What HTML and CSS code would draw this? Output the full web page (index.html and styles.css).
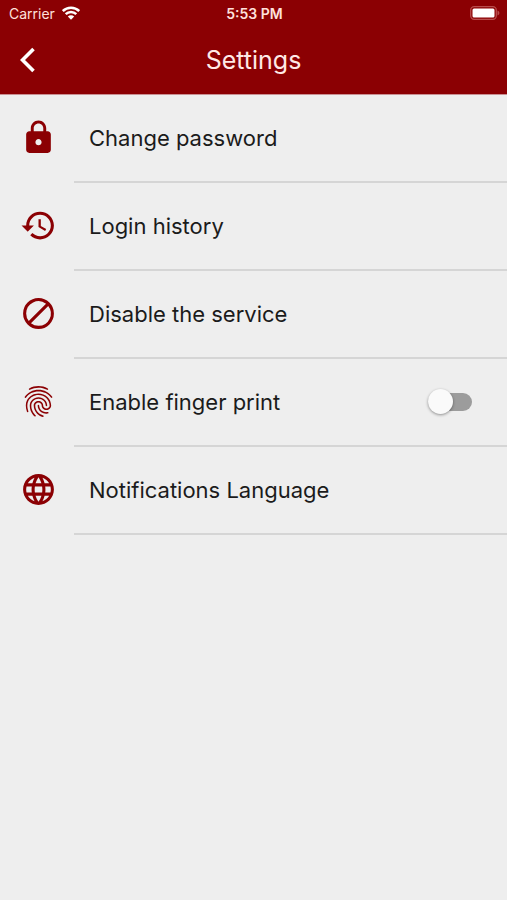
FILE: index.html
```html
<!DOCTYPE html>
<html lang="en">
<head>
<meta charset="utf-8">
<meta name="viewport" content="width=device-width, initial-scale=1">
<title>Settings</title>
<link rel="stylesheet" href="styles.css">
</head>
<body>
<header class="header">
  <div class="status">
    <div class="carrier">
      <span>Carrier</span>
      <svg class="wifi" viewBox="0 0 18 14" aria-hidden="true"><path d="M.8 5C5.300.5 12.700.5 17.200 5M3.700 8.200c3-3 7.600-3 10.600 0" fill="none" stroke="currentColor" stroke-width="2.500"/><path d="M9 13.800 5.800 10.600c1.900-1.700 4.500-1.700 6.400 0z" fill="currentColor"/></svg>
    </div>
    <time class="clock">5:53 PM</time>
    <svg class="battery" viewBox="0 0 30 14" aria-hidden="true"><rect x=".7" y=".7" width="25.600" height="12.600" rx="3.500" fill="none" stroke="#b84c4c" stroke-width="1.300"/><rect x="2.500" y="2.500" width="22" height="9" rx="1.500" fill="#fff"/><path d="M27.500 4.500c2.500 1 2.500 4 0 5z" fill="#b84c4c"/></svg>
  </div>
  <div class="titlebar">
    <button class="back" type="button" aria-label="Back"><svg viewBox="0 0 16 26" aria-hidden="true"><path d="M13.500 2 2.500 13l11 11" fill="none" stroke="currentColor" stroke-width="3.600"/></svg></button>
    <h1 class="title">Settings</h1>
  </div>
</header>
<main>
  <ul class="list">
    <li class="row">
      <svg class="icon" viewBox="0 0 24 24" aria-hidden="true"><path d="M18 8h-1V6c0-2.760-2.240-5-5-5S7 3.240 7 6v2H6c-1.100 0-2 .9-2 2v10c0 1.100.9 2 2 2h12c1.100 0 2-.9 2-2V10c0-1.100-.9-2-2-2zm-6 9c-1.100 0-2-.9-2-2s.9-2 2-2 2 .9 2 2-.9 2-2 2zm3.100-9H8.900V6c0-1.710 1.390-3.100 3.100-3.100s3.100 1.390 3.100 3.100v2z"/></svg>
      <a class="item" href="#password">Change password</a>
    </li>
    <li class="row">
      <svg class="icon" viewBox="0 0 24 24" aria-hidden="true"><path d="M13 3c-4.970 0-9 4.030-9 9H1l3.890 3.890.07.14L9 12H6c0-3.870 3.130-7 7-7s7 3.130 7 7-3.130 7-7 7c-1.930 0-3.680-.79-4.940-2.060l-1.420 1.420C8.270 19.990 10.510 21 13 21c4.970 0 9-4.030 9-9s-4.030-9-9-9zm-1 5v5l4.280 2.540.72-1.210-3.500-2.080V8H12z"/></svg>
      <a class="item" href="#history">Login history</a>
    </li>
    <li class="row">
      <svg class="icon" viewBox="0 0 24 24" aria-hidden="true"><path d="M12 2a10 10 0 1 0 0 20 10 10 0 0 0 0-20zM4 12a8 8 0 0 1 12.900-6.310L5.690 16.900A7.900 7.900 0 0 1 4 12zm8 8a7.900 7.900 0 0 1-4.900-1.690L18.310 7.100A8 8 0 0 1 12 20z"/></svg>
      <a class="item" href="#disable">Disable the service</a>
    </li>
    <li class="row">
      <svg class="icon" viewBox="0 0 24 24" aria-hidden="true"><path d="M17.810 4.470c-.08 0-.16-.02-.23-.06C15.660 3.420 14 3 12.010 3c-1.980 0-3.860.47-5.570 1.410-.24.13-.54.04-.68-.2-.13-.24-.04-.55.2-.68C7.820 2.520 9.860 2 12.010 2c2.130 0 3.990.47 6.030 1.520.25.13.34.43.21.67-.09.18-.26.28-.44.28zM3.500 9.720c-.1 0-.2-.03-.29-.09-.23-.16-.28-.47-.12-.7.99-1.400 2.250-2.500 3.750-3.270C9.980 4.040 14 4.030 17.150 5.650c1.500.77 2.760 1.860 3.750 3.250.16.22.11.54-.12.7-.23.16-.54.11-.7-.12-.9-1.260-2.040-2.250-3.390-2.940-2.870-1.470-6.540-1.470-9.400.01-1.360.7-2.500 1.700-3.400 2.960-.08.14-.23.21-.39.21zm6.250 12.070c-.13 0-.26-.05-.35-.15-.87-.87-1.340-1.430-2.010-2.640-.69-1.230-1.050-2.730-1.050-4.340 0-2.970 2.540-5.390 5.660-5.390s5.660 2.420 5.660 5.390c0 .28-.22.5-.5.5s-.5-.22-.5-.5c0-2.420-2.090-4.390-4.660-4.390-2.570 0-4.660 1.970-4.660 4.390 0 1.440.32 2.770.93 3.850.64 1.150 1.080 1.640 1.850 2.420.19.2.19.51 0 .71-.11.1-.24.15-.37.15zm7.170-1.850c-1.190 0-2.240-.3-3.100-.89-1.490-1.010-2.380-2.650-2.380-4.390 0-.28.22-.5.5-.5s.5.22.5.5c0 1.410.72 2.740 1.940 3.560.71.48 1.540.71 2.540.71.24 0 .64-.03 1.040-.1.27-.05.53.13.58.41.05.27-.13.53-.41.58-.57.11-1.070.12-1.210.12zM14.910 22c-.04 0-.09-.01-.13-.02-1.590-.44-2.630-1.030-3.720-2.100-1.400-1.390-2.170-3.240-2.170-5.220 0-1.620 1.380-2.940 3.080-2.940 1.700 0 3.080 1.320 3.080 2.940 0 1.070.93 1.940 2.080 1.940s2.080-.87 2.080-1.940c0-3.770-3.250-6.830-7.250-6.830-2.840 0-5.440 1.580-6.610 4.030-.39.81-.59 1.760-.59 2.800 0 .78.07 2.010.67 3.610.1.26-.03.55-.29.64-.26.1-.55-.04-.64-.29-.49-1.310-.73-2.610-.73-3.960 0-1.200.23-2.290.68-3.240 1.330-2.790 4.280-4.600 7.510-4.600 4.550 0 8.250 3.510 8.250 7.830 0 1.620-1.380 2.940-3.080 2.940s-3.080-1.320-3.080-2.940c0-1.070-.93-1.940-2.080-1.940s-2.080.87-2.080 1.940c0 1.710.66 3.310 1.870 4.510.95.94 1.860 1.460 3.270 1.850.27.07.42.35.35.61-.05.23-.26.38-.47.38z"/></svg>
      <div class="item">
        <label class="label" for="fingerprint">Enable finger print</label>
        <input class="switch" id="fingerprint" type="checkbox" role="switch">
      </div>
    </li>
    <li class="row">
      <svg class="icon" viewBox="0 0 24 24" aria-hidden="true"><path d="M11.990 2C6.470 2 2 6.480 2 12s4.470 10 9.990 10C17.520 22 22 17.520 22 12S17.520 2 11.990 2zm6.930 6h-2.950c-.32-1.250-.78-2.450-1.380-3.560 1.840.63 3.370 1.910 4.330 3.560zM12 4.040c.83 1.200 1.480 2.530 1.910 3.960h-3.820c.43-1.430 1.080-2.760 1.910-3.960zM4.260 14C4.100 13.360 4 12.690 4 12s.1-1.360.26-2h3.380c-.08.66-.14 1.320-.14 2s.06 1.340.14 2H4.260zm.82 2h2.950c.32 1.250.78 2.450 1.380 3.560-1.840-.63-3.370-1.900-4.330-3.560zm2.950-8H5.080c.96-1.660 2.490-2.930 4.330-3.560C8.810 5.550 8.350 6.750 8.030 8zM12 19.960c-.83-1.200-1.480-2.530-1.910-3.960h3.820c-.43 1.430-1.080 2.760-1.910 3.960zM14.340 14H9.660c-.09-.66-.16-1.320-.16-2s.07-1.350.16-2h4.680c.09.65.16 1.320.16 2s-.07 1.340-.16 2zm.25 5.560c.6-1.110 1.060-2.310 1.380-3.560h2.950c-.96 1.650-2.490 2.930-4.330 3.560zM16.360 14c.08-.66.14-1.320.14-2s-.06-1.340-.14-2h3.380c.16.64.26 1.310.26 2s-.1 1.360-.26 2h-3.380z"/></svg>
      <a class="item" href="#language">Notifications Language</a>
    </li>
  </ul>
</main>
</body>
</html>
```
FILE: styles.css
```css
* {
  box-sizing: border-box;
}

body {
  margin: 0;
  min-height: 100vh;
  background: #eee;
  color: #1b1b1b;
  font-family: Inter, "Liberation Sans", sans-serif;
  font-size: 22px;
}

.header {
  background: #8b0003;
  color: #fff;
  border-bottom: 1px solid #c99093;
}

.status {
  display: grid;
  grid-template-columns: 1fr auto 1fr;
  align-items: center;
  height: 26px;
  padding: 0 7px 0 9px;
  font-size: 14px;
  color: #ffe0dc;
}

.carrier {
  display: flex;
  align-items: center;
  gap: 7px;
}

.wifi {
  width: 18px;
  height: 14px;
  color: #fff;
}

.clock {
  font-size: 14px;
  font-weight: 600;
}

.battery {
  justify-self: end;
  width: 30px;
  height: 14px;
}

.titlebar {
  display: grid;
  grid-template-columns: 56px 1fr 56px;
  align-items: center;
  height: 68px;
}

.back {
  display: flex;
  align-items: center;
  height: 56px;
  padding: 0 0 0 20px;
  border: 0;
  background: none;
  color: #fff;
}

.back svg {
  width: 16px;
  height: 26px;
}

.title {
  margin: 0;
  color: #ffe9e6;
  font-size: 25px;
  font-weight: 400;
  text-align: center;
}

.list {
  margin: 0;
  padding: 0;
  list-style: none;
}

.row {
  display: grid;
  grid-template-columns: 74px 1fr;
  align-items: center;
}

.icon {
  width: 37px;
  height: 37px;
  margin: 0 0 3px 20px;
  fill: #8b0003;
}

.item {
  display: flex;
  align-items: center;
  justify-content: space-between;
  height: 88px;
  padding: 0 35px 0 15px;
  border-bottom: 2px solid #d5d5d5;
  color: inherit;
  text-decoration: none;
}

.switch {
  appearance: none;
  position: relative;
  width: 44px;
  height: 18px;
  margin: 0;
  border-radius: 9px;
  background: #9c9c9c;
}

.switch::before {
  content: "";
  position: absolute;
  top: -4px;
  left: 0;
  width: 25px;
  height: 25px;
  border-radius: 50%;
  background: #fafafa;
  box-shadow: 0 1px 3px rgba(0, 0, 0, .4);
}

.switch:checked {
  background: #c57f80;
}

.switch:checked::before {
  left: 19px;
  background: #8b0003;
}
```
